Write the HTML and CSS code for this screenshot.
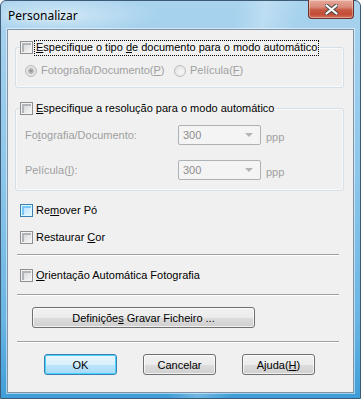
FILE: index.html
```html
<!DOCTYPE html>
<html lang="pt">
<head>
  <meta charset="UTF-8">
  <meta name="viewport" content="width=device-width, initial-scale=1.0">
  <link rel="stylesheet" href="styles.css">
</head>
<body>
  <div class="window">
    <div class="titlebar">
      <span class="title">Personalizar</span>
      <span class="close">
        <svg width="13" height="11" viewBox="0 0 13 11">
          <path d="M1.5 1.5 L11.5 9.5 M11.5 1.5 L1.5 9.5" stroke="#4a4a4a" stroke-width="4" stroke-linecap="round"/>
          <path d="M1.5 1.5 L11.5 9.5 M11.5 1.5 L1.5 9.5" stroke="#ffffff" stroke-width="2.2" stroke-linecap="round"/>
        </svg>
      </span>
    </div>

    <div class="client">
      <fieldset class="group group-one">
        <legend class="legend">
          <span class="cb"></span>
          <span class="focus"><u>E</u>specifique o tipo <u>d</u>e documento para o modo automático</span>
        </legend>
        <div class="radios">
          <span class="radio-item first"><span class="radio checked"></span><span>Fotografia/Documento(<u>P</u>)</span></span>
          <span class="radio-item second"><span class="radio"></span><span>Película(<u>F</u>)</span></span>
        </div>
      </fieldset>

      <fieldset class="group group-two">
        <legend class="legend">
          <span class="cb"></span>
          <span class="plain"><u>E</u>specifique a resolução para o modo automático</span>
        </legend>
        <div class="res-row">
          <span class="res-label">Fo<u>t</u>ografia/Documento:</span>
          <span class="combo"><span>300</span><span class="arrow"></span></span>
          <span class="unit">ppp</span>
        </div>
        <div class="res-row second-row">
          <span class="res-label">Película(<u>I</u>):</span>
          <span class="combo"><span>300</span><span class="arrow"></span></span>
          <span class="unit">ppp</span>
        </div>
      </fieldset>

      <div class="check-row first-check"><span class="cb hover"></span><span>Re<u>m</u>over Pó</span></div>
      <div class="check-row second-check"><span class="cb"></span><span>Restaurar <u>C</u>or</span></div>
      <div class="sep sep-one"></div>
      <div class="check-row third-check"><span class="cb"></span><span><u>O</u>rientação Automática Fotografia</span></div>
      <div class="sep sep-two"></div>

      <button class="btn wide">Definiçõe<u>s</u> Gravar Ficheiro ...</button>

      <div class="sep sep-three"></div>

      <div class="buttons">
        <button class="btn default">OK</button>
        <button class="btn">Cancelar</button>
        <button class="btn">Ajuda(<u>H</u>)</button>
      </div>
    </div>
  </div>
</body>
</html>
```

FILE: styles.css
```css
body {
  margin: 0;
  font-family: "Liberation Sans", Arial, sans-serif;
  font-size: 11px;
  color: #000;
}

.window {
  width: 361px;
  height: 399px;
  box-sizing: border-box;
  display: flex;
  flex-direction: column;
  border: 1px solid #3d5a76;
  border-radius: 6px 6px 0 0;
  background:
    radial-gradient(ellipse 140px 30px at 60px 14px, rgba(255,255,255,0.45), rgba(255,255,255,0) 70%),
    linear-gradient(100deg, rgba(255,255,255,0) 55%, rgba(255,255,255,0.25) 62%, rgba(255,255,255,0) 70%),
    linear-gradient(to bottom, #a9d3ee 0%, #8cc6ea 45%, #6ab5e3 80%, #3f9ed8 100%);
}

.titlebar {
  height: 28px;
  display: flex;
  justify-content: space-between;
  align-items: flex-start;
  padding-left: 7px;
}

.title {
  font-family: "Segoe UI", "Noto Sans", sans-serif;
  font-size: 12px;
  line-height: 16px;
  margin-top: 7px;
  color: #000;
  text-shadow: 0 0 6px rgba(255,255,255,0.9);
}

.close {
  width: 46px;
  height: 19px;
  box-sizing: border-box;
  margin-top: -1px;
  margin-right: 6px;
  border: 1px solid #6b3029;
  border-top: none;
  border-radius: 0 0 4px 4px;
  background: linear-gradient(to bottom, #e9a99b 0%, #d98a78 40%, #c75a44 55%, #c34c35 80%, #d5735e 100%);
  box-shadow: inset 0 0 0 1px rgba(255,255,255,0.35);
  display: flex;
  align-items: center;
  justify-content: center;
}

.client {
  flex: 1;
  margin: 0 6px 5px 6px;
  border: 1px solid #8093a7;
  background: #f0f0f0;
  box-shadow: 0 0 0 1px rgba(255,255,255,0.5);
}

/* group boxes */
.group {
  width: 329px;
  box-sizing: border-box;
  margin: 0 0 0 7px;
  border: 1px solid #d5dfe5;
  border-radius: 3px;
  box-shadow: inset 0 0 0 1px #fafafa;
  padding: 10px 0 10px 4px;
  min-width: 0;
}

.group-one {
  margin-top: 11px;
}

.group-two {
  margin-top: 14px;
}

.legend {
  padding: 0 2px 0 0;
  display: flex;
  align-items: center;
  line-height: 13px;
  height: 13px;
}

.focus {
  margin-left: 2px;
  padding: 0 1px 1px 1px;
  line-height: 13px;
  outline: 1px dotted #000;
  outline-offset: 0;
}

.plain {
  margin-left: 3px;
}

/* checkboxes */
.cb {
  width: 13px;
  height: 13px;
  box-sizing: border-box;
  border: 1px solid #8f8f8f;
  background: #f4f4f4;
  box-shadow: inset 0 0 0 1px #f4f4f4, inset 1px 1px 0 2px #b1b5ba;
  background-image: linear-gradient(135deg, #cfd2d6, #f7f7f7);
  flex: none;
}

.cb.hover {
  border-color: #3c7fb1;
  box-shadow: inset 0 0 0 1px #def9fa, inset 1px 1px 0 2px #79c6f9;
  background-image: linear-gradient(135deg, #b1dffd, #e9f7fe);
}

.check-row {
  display: flex;
  align-items: center;
  gap: 3px;
  height: 13px;
  line-height: 13px;
  margin-left: 12px;
}

.first-check { margin-top: 13px; }
.second-check { margin-top: 14px; }
.third-check { margin-top: 13px; }

/* radios */
.radios {
  display: flex;
  height: 13px;
  line-height: 13px;
  color: #a0a0a0;
}

.radio-item {
  display: flex;
  align-items: center;
  gap: 4px;
}

.radio-item.first {
  margin-left: 5px;
  width: 149px;
}

.radio {
  width: 12px;
  height: 12px;
  box-sizing: border-box;
  border-radius: 50%;
  border: 1px solid #bcbcbc;
  background: radial-gradient(circle at 60% 60%, #f7f7f7, #dedede);
}

.radio.checked {
  background: radial-gradient(circle, #8c8c8c 0, #bdbdbd 2.5px, #e0e0e0 3.2px, #eaeaea 100%);
}

/* resolution rows */
.res-row {
  display: flex;
  align-items: center;
  height: 20px;
  color: #a0a0a0;
  margin-left: 5px;
}

.second-row {
  margin-top: 15px;
}

.res-label {
  width: 153px;
}

.combo {
  width: 83px;
  height: 20px;
  box-sizing: border-box;
  border: 1px solid #adb2b5;
  border-radius: 2px;
  background: #f4f4f4;
  display: flex;
  align-items: center;
  justify-content: space-between;
  padding: 0 7px 0 4px;
  color: #8d8d8d;
}

.arrow {
  width: 0;
  height: 0;
  border-left: 4px solid transparent;
  border-right: 4px solid transparent;
  border-top: 4px solid #b4b4b4;
}

.unit {
  margin-left: 5px;
  margin-top: 3px;
}

/* separators */
.sep {
  width: 322px;
  height: 1px;
  margin-left: 9px;
  background: #a0a0a0;
  border-bottom: 1px solid #ffffff;
}

.sep-one { margin-top: 10px; }
.sep-two { margin-top: 12px; }
.sep-three { margin-top: 13px; }

/* buttons */
.btn {
  height: 21px;
  box-sizing: border-box;
  font-family: "Liberation Sans", Arial, sans-serif;
  font-size: 11px;
  color: #000;
  border: 1px solid #707070;
  border-radius: 3px;
  padding: 0;
  background: linear-gradient(to bottom, #f2f2f2 0%, #ebebeb 50%, #dddddd 51%, #cfcfcf 100%);
  box-shadow: inset 0 0 0 1px rgba(255,255,255,0.7);
}

.wide {
  display: block;
  width: 223px;
  margin: 11px 0 0 24px;
}

.buttons {
  display: flex;
  gap: 26px;
  margin: 11px 0 0 36px;
}

.buttons .btn {
  width: 73px;
}

.default {
  border-color: #3c7fb1;
  background: linear-gradient(to bottom, #eaf6fd 0%, #d9f0fc 50%, #bee6fd 51%, #a7d9f5 100%);
  box-shadow: inset 0 0 0 1px #48d4fd;
}
```
